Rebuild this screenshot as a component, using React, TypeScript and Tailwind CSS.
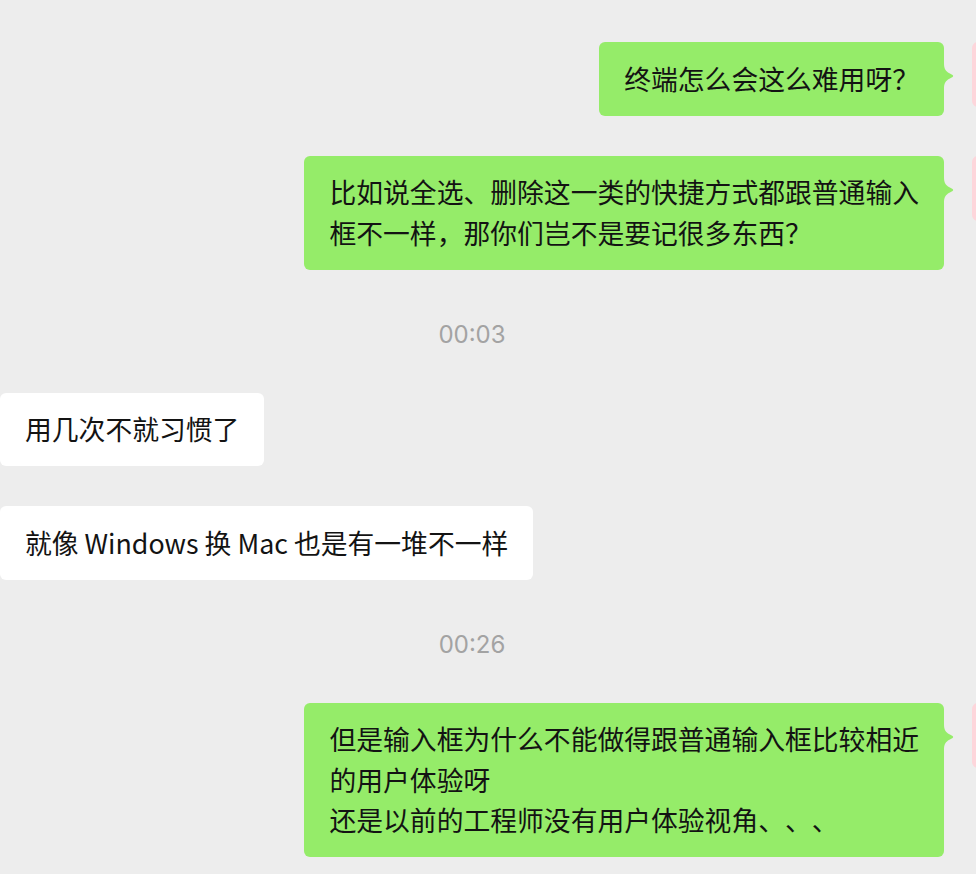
import type { ReactNode } from 'react';

type Msg =
  | { kind: 'time'; text: string }
  | { kind: 'me' | 'other'; lines: string[] };

const messages: Msg[] = [
  { kind: 'me', lines: ['终端怎么会这么难用呀？'] },
  { kind: 'me', lines: ['比如说全选、删除这一类的快捷方式都跟普通输入', '框不一样，那你们岂不是要记很多东西？'] },
  { kind: 'time', text: '00:03' },
  { kind: 'other', lines: ['用几次不就习惯了'] },
  { kind: 'other', lines: ['就像 Windows 换 Mac 也是有一堆不一样'] },
  { kind: 'time', text: '00:26' },
  {
    kind: 'me',
    lines: ['但是输入框为什么不能做得跟普通输入框比较相近', '的用户体验呀', '还是以前的工程师没有用户体验视角、、、'],
  },
];

function Tail({ color, side }: { color: string; side: 'left' | 'right' }) {
  return (
    <svg
      width="10"
      height="26"
      viewBox="0 0 10 26"
      className={`absolute top-[21px] ${side === 'right' ? 'left-full' : 'right-full -scale-x-100'}`}
    >
      <path d="M0 0 C0 5 1 7 4 9.5 L8.6 12 Q9.8 13 8.6 14 L4 16.5 C1 19 0 21 0 26 Z" fill={color} />
    </svg>
  );
}

function Bubble({ me, children }: { me: boolean; children: ReactNode }) {
  return (
    <div
      className={`relative rounded-[6px] px-[25px] py-[16.5px] text-[26.8px] leading-[40.5px] text-[#131313] [text-spacing-trim:space-all] ${
        me ? 'bg-[#95ec69]' : 'bg-white'
      }`}
    >
      {children}
      <Tail color={me ? '#95ec69' : '#ffffff'} side={me ? 'right' : 'left'} />
    </div>
  );
}

function Avatar({ me }: { me: boolean }) {
  return <div className={`h-[65px] w-[65px] shrink-0 rounded-[6px] ${me ? 'bg-[#fdd6db]' : 'bg-[#c9d6e3]'}`} />;
}

export default function App() {
  return (
    <div
      className="h-[874px] w-full overflow-hidden bg-[#ededed]"
      style={{ fontFamily: '"Noto Sans CJK SC", "Noto Sans", sans-serif' }}
    >
      <div className="-ml-[93px] flex w-[1130px] flex-col gap-[40px] pt-[42px]">
        {messages.map((m, i) => {
          if (m.kind === 'time') {
            return (
              <div
                key={i}
                className="h-[43px] pt-[10px] text-center text-[24px] leading-[30px] text-[#a3a3a3]"
                style={{ fontFamily: 'Inter, "Liberation Sans", sans-serif' }}
              >
                {m.text}
              </div>
            );
          }
          const me = m.kind === 'me';
          return (
            <div key={i} className={`flex items-start gap-[28px] ${me ? 'justify-end' : 'justify-start'}`}>
              {!me && <Avatar me={false} />}
              <Bubble me={me}>
                {m.lines.map((l, j) => (
                  <div key={j} className="whitespace-pre">
                    {l}
                  </div>
                ))}
              </Bubble>
              {me && <Avatar me />}
            </div>
          );
        })}
      </div>
    </div>
  );
}
